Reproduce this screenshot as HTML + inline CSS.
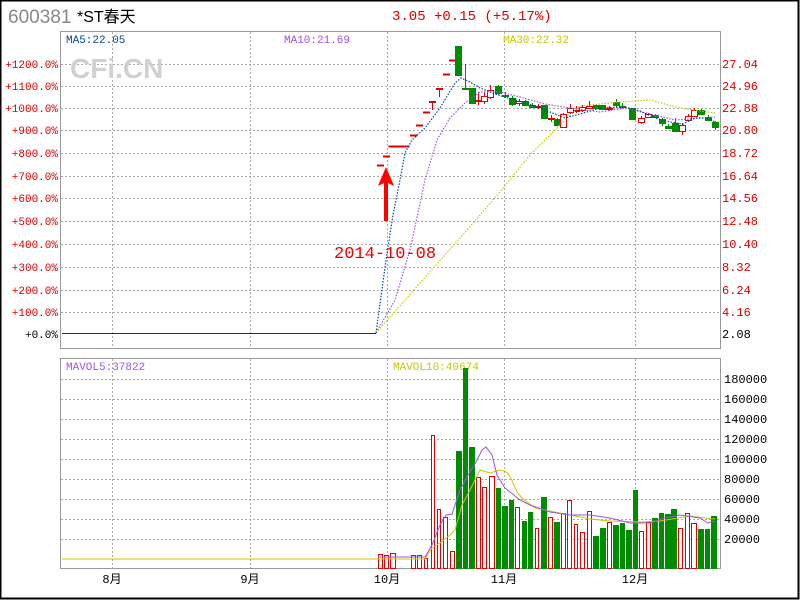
<!DOCTYPE html>
<html><head><meta charset="utf-8"><style>
html,body{margin:0;padding:0;background:#fff}
body{width:800px;height:600px;overflow:hidden;position:relative;font-family:"Liberation Mono","Noto Sans CJK SC",monospace}
.t{position:absolute;white-space:nowrap;line-height:1}
</style></head><body>
<svg id="s" width="800" height="600" style="position:absolute;left:0;top:0" xmlns="http://www.w3.org/2000/svg" font-family="Liberation Mono, Noto Sans CJK SC, monospace">
<rect x="0.5" y="0.5" width="798" height="598" fill="none" stroke="#000" stroke-width="2"/>
<text x="8" y="23" font-family="Liberation Sans, sans-serif" font-size="19" fill="#888">600381</text>
<text x="77" y="22" font-family="Liberation Sans, Noto Sans CJK SC, sans-serif" font-size="16" fill="#000">*ST春天</text>
<text x="392" y="20" font-size="14" fill="#d00">3.05 +0.15 (+5.17%)</text>
<g id="grid"></g>
<rect x="60.5" y="31.5" width="660" height="317" fill="none" stroke="#999"/>
<rect x="60.5" y="358.5" width="660" height="210" fill="none" stroke="#999"/>
<text x="70" y="78" font-family="Liberation Sans, sans-serif" font-weight="bold" font-size="28" fill="#d0d0d0">CFi.CN</text>
<text x="66" y="43" font-size="11" fill="#00479d">MA5:22.05</text>
<text x="284" y="43" font-size="11" fill="#a050f0">MA10:21.69</text>
<text x="503" y="43" font-size="11" fill="#c8c800">MA30:22.32</text>
<text x="66" y="370" font-size="11" fill="#a050f0">MAVOL5:37822</text>
<text x="393" y="370" font-size="11" fill="#c8c800">MAVOL10:40674</text>
<g font-size="11" fill="#d00" text-anchor="end">
<text x="58" y="68">+1200.0%</text><text x="58" y="90">+1100.0%</text><text x="58" y="112">+1000.0%</text><text x="58" y="134">+900.0%</text><text x="58" y="157">+800.0%</text><text x="58" y="180">+700.0%</text><text x="58" y="202">+600.0%</text><text x="58" y="225">+500.0%</text><text x="58" y="248">+400.0%</text><text x="58" y="271">+300.0%</text><text x="58" y="294">+200.0%</text><text x="58" y="316">+100.0%</text><text x="58" y="338" fill="#000">+0.0%</text>
</g>
<g font-size="12" fill="#d00">
<text x="722" y="68">27.04</text><text x="722" y="90">24.96</text><text x="722" y="112">22.88</text><text x="722" y="134">20.80</text><text x="722" y="157">18.72</text><text x="722" y="180">16.64</text><text x="722" y="202">14.56</text><text x="722" y="225">12.48</text><text x="722" y="248">10.40</text><text x="722" y="271">8.32</text><text x="722" y="294">6.24</text><text x="722" y="316">4.16</text><text x="722" y="338" fill="#000">2.08</text>
</g>
<g font-size="12" fill="#000">
<text x="724" y="383">180000</text><text x="724" y="403">160000</text><text x="724" y="423">140000</text><text x="724" y="443">120000</text><text x="724" y="463">100000</text><text x="724" y="483">80000</text><text x="724" y="503">60000</text><text x="724" y="523">40000</text><text x="724" y="543">20000</text>
</g>
<g font-family="Liberation Mono, Noto Sans CJK SC, monospace" font-size="12" fill="#000" text-anchor="middle">
<text x="112" y="583">8月</text><text x="250" y="583">9月</text><text x="387" y="583">10月</text><text x="504" y="583">11月</text><text x="635" y="583">12月</text>
</g>
<line x1="62" y1="333.5" x2="376" y2="333.5" stroke="#900" stroke-width="1"/>
<g id="c"></g>
<g fill="none" stroke-dasharray="1.5 1.5" stroke-width="1.2">
<polyline stroke="#c8c800" points="376,333 420,283 460,238 500,192 530,155 560,125 580,106 620,102 650,100 680,108 715,113"/>
<polyline stroke="#a050f0" points="376,333 395,300 410,250 425,180 437,140 450,118 465,103 480,92 500,92 520,97 545,104 570,108 600,112 625,108 650,114 675,120 690,119 715,117"/>
<polyline stroke="#00479d" points="376,333 386,260 393,215 400,180 405,153 412,140 425,128 440,108 455,83 461,78 470,82 480,88 495,94 515,100 535,106 555,114 565,118 580,114 600,108 625,107 640,111 655,118 670,122 683,124 695,118 708,118 715,122"/>
</g>
<g fill="none" stroke-width="1">
<polyline stroke="#c8c800" points="62,559 425,559 432,548 440,543 450,535 455,530 462,505 470,490 480,470 490,473 500,470 505,471 510,476 517,492 522,498 535,508 560,513 590,519 610,521 640,522 660,521 690,516 705,518 715,519"/>
<polyline stroke="#a050f0" points="378,557 425,557 432,545 440,525 446,515 452,514 460,490 468,475 476,462 482,450 486,447 492,455 497,475 505,488 520,500 530,505 550,512 570,515 590,515 610,518 630,523 650,523 665,518 680,515 700,518 708,523 715,521"/>
</g>
<polygon fill="#f00" points="386,167 378,186 384,183 384,221 388,221 388,183 394,186"/>
<text x="334" y="258" font-size="17" fill="#e00">2014-10-08</text>
</svg>
<script>
var ns="http://www.w3.org/2000/svg",g=document.getElementById('grid'),c=document.getElementById('c');
function el(p,t,a){var e=document.createElementNS(ns,t);for(var k in a)e.setAttribute(k,a[k]);p.appendChild(e);return e;}
var d={stroke:"#aaa","stroke-dasharray":"2 2","stroke-width":1};
[64,86,108,130,153,176,198,221,244,267,290,312].forEach(function(y){el(g,'line',Object.assign({x1:61,x2:720,y1:y+.5,y2:y+.5},d));});
[379,399,419,439,459,479,499,519,539].forEach(function(y){el(g,'line',Object.assign({x1:61,x2:720,y1:y+.5,y2:y+.5},d));});
[112,250,387,504,635].forEach(function(x){el(g,'line',Object.assign({x1:x+.5,x2:x+.5,y1:32,y2:348},d));el(g,'line',Object.assign({x1:x+.5,x2:x+.5,y1:359,y2:568},d));});
var R="#e00000",G="#008c00";
// candles: x, top, bottom, high, low, color(r/g)
var K=[[380,165,165,165,165,'r'],[386,156,156,156,156,'r'],[392,146,146,146,146,'r'],[399,146,146,146,146,'r'],[405,146,146,146,146,'r'],[413,135,135,135,135,'r'],[419,125,125,125,125,'r'],[426,112,112,112,112,'r'],[432,101,101,101,110,'r'],[439,88,88,88,97,'r'],[446,74,74,74,74,'r'],[452,60,60,60,60,'r'],[458,46,75,46,76,'g'],[465,88,88,64,88,'g'],[472,88,103,88,103,'g'],[478,100,101,92,105,'r'],[484,96,101,92,104,'r'],[490,90,97,85,99,'r'],[498,86,93,85,95,'g'],[505,95,96,92,98,'g'],[512,98,104,96,106,'g'],[519,101,103,99,106,'r'],[525,101,105,100,106,'g'],[532,105,107,103,108,'g'],[538,106,107,104,109,'r'],[544,105,118,105,118,'g'],[551,118,119,115,122,'r'],[557,119,125,118,126,'g'],[563,114,127,113,128,'r'],[570,108,112,104,114,'r'],[576,110,111,106,113,'r'],[582,107,110,105,112,'r'],[589,106,108,101,109,'r'],[596,105,108,104,109,'g'],[602,105,109,105,110,'g'],[609,108,109,106,111,'r'],[616,102,105,99,107,'g'],[622,106,107,103,108,'g'],[632,108,119,108,120,'g'],[641,118,122,116,124,'r'],[648,114,117,113,118,'r'],[655,115,117,114,118,'g'],[662,119,123,118,126,'g'],[668,126,128,124,129,'g'],[675,123,131,118,132,'g'],[682,125,131,123,135,'r'],[688,116,120,114,122,'r'],[694,110,116,108,117,'r'],[701,110,114,109,115,'g'],[708,117,120,115,121,'g'],[715,122,127,121,130,'g']];
K.forEach(function(k){var x=k[0],col=k[5]=='r'?R:G;
 if(k[1]==k[2]&&k[3]==k[4]&&k[1]==k[3]){var w=(k[0]>=392&&k[0]<=405)?7:6;el(c,'line',{x1:x-w/2,x2:x+w/2+1,y1:k[1]+.5,y2:k[1]+.5,stroke:col,'stroke-width':2});return;}
 el(c,'line',{x1:x+.5,x2:x+.5,y1:k[3],y2:k[4],stroke:col});
 var h=Math.max(k[2]-k[1],1);
 if(col==R)el(c,'rect',{x:x-2.5,y:k[1]+.5,width:6,height:h,fill:'#fff',stroke:R});
 else el(c,'rect',{x:x-3,y:k[1],width:7,height:h+1,fill:G});});
// volume bars: x1,x2,top,color
var V=[[378,383,554,'r'],[384,389,555,'r'],[390,396,553,'r'],[411,416,555,'r'],[417,422,555,'r'],[424,428,558,'r'],[431,435,435,'r'],[437,441,509,'r'],[443,448,517,'r'],[450,455,551,'r'],[456,462,451,'g'],[463,468,368,'g'],[469,475,447,'g'],[476,481,477,'r'],[482,487,487,'r'],[489,495,476,'r'],[496,501,488,'g'],[502,508,506,'g'],[509,514,500,'g'],[515,520,507,'r'],[522,527,521,'g'],[528,533,512,'g'],[535,539,528,'r'],[541,547,497,'g'],[548,553,517,'r'],[554,560,522,'g'],[561,566,513,'r'],[567,572,500,'r'],[574,578,524,'r'],[580,585,532,'r'],[587,592,511,'r'],[593,599,536,'g'],[600,606,528,'g'],[607,612,522,'r'],[613,619,525,'g'],[620,625,523,'g'],[626,632,530,'g'],[633,638,490,'g'],[639,644,531,'r'],[646,651,522,'r'],[652,658,518,'g'],[659,664,513,'g'],[665,671,514,'g'],[671,677,509,'g'],[678,683,528,'r'],[685,690,513,'r'],[691,697,523,'r'],[698,704,529,'g'],[705,710,529,'g'],[711,717,516,'g']];
V.forEach(function(v){if(v[3]=='r')el(c,'rect',{x:v[0]+.5,y:v[2]+.5,width:v[1]-v[0]-1,height:568-v[2],fill:'#fff',stroke:R});
 else el(c,'rect',{x:v[0],y:v[2],width:v[1]-v[0],height:569-v[2],fill:G});});
</script>
</body></html>
